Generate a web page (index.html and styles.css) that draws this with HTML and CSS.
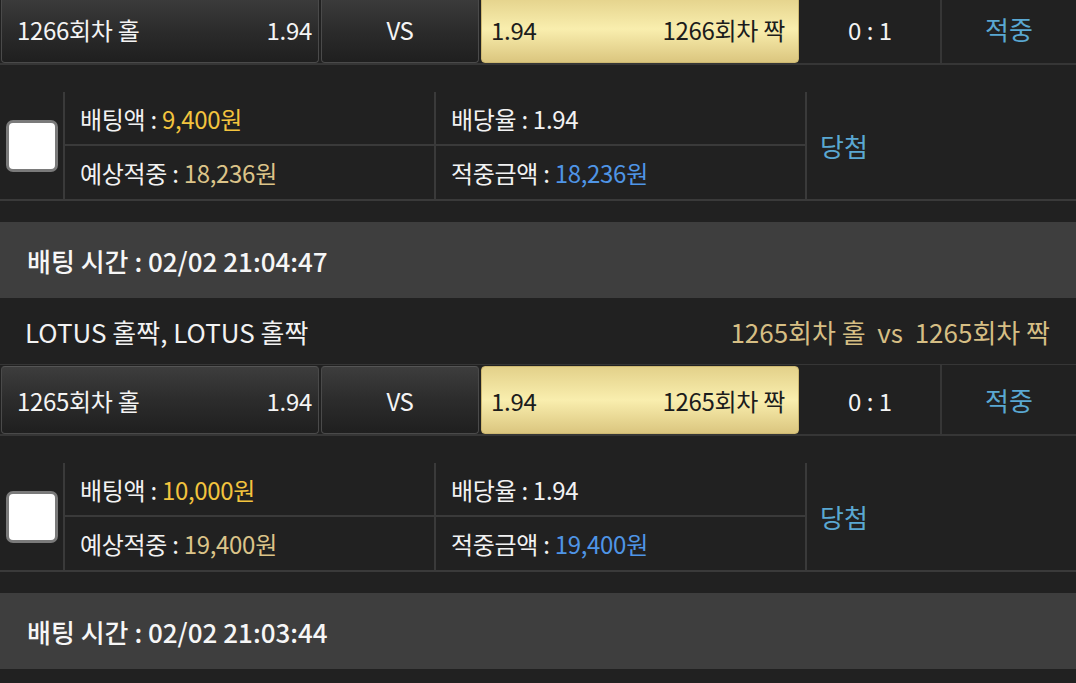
FILE: index.html
```html
<!DOCTYPE html>
<html>
<head>
<meta charset="utf-8">
<title>배팅 내역</title>
<link rel="stylesheet" href="styles.css">
</head>
<body>
<div class="list">
  <section class="bet">
    <div class="match">
      <div class="pick"><div class="btn btn-dark btn-home"><span>1266회차 홀</span><span>1.94</span></div></div>
      <div class="pick pick-vs"><div class="btn btn-dark btn-vs">VS</div></div>
      <div class="pick"><div class="btn btn-gold btn-away"><span>1.94</span><span>1266회차 짝</span></div></div>
      <div class="score">0 : 1</div>
      <div class="result">적중</div>
    </div>
    <div class="detail">
      <div class="check"><span class="box"></span></div>
      <div class="cell top">배팅액 : <span class="amt-yellow">9,400원</span></div>
      <div class="cell top">배당율 : 1.94</div>
      <div class="status">당첨</div>
      <div class="cell">예상적중 : <span class="amt-gold">18,236원</span></div>
      <div class="cell">적중금액 : <span class="amt-blue">18,236원</span></div>
    </div>
    <div class="time">배팅 시간 : 02/02 21:04:47</div>
  </section>

  <section class="bet">
    <div class="title">
      <span class="game">LOTUS 홀짝, LOTUS 홀짝</span>
      <span class="round">1265회차 홀 &nbsp;vs &nbsp;1265회차 짝</span>
    </div>
    <div class="match">
      <div class="pick"><div class="btn btn-dark btn-home"><span>1265회차 홀</span><span>1.94</span></div></div>
      <div class="pick pick-vs"><div class="btn btn-dark btn-vs">VS</div></div>
      <div class="pick"><div class="btn btn-gold btn-away"><span>1.94</span><span>1265회차 짝</span></div></div>
      <div class="score">0 : 1</div>
      <div class="result">적중</div>
    </div>
    <div class="detail">
      <div class="check"><span class="box"></span></div>
      <div class="cell top">배팅액 : <span class="amt-yellow">10,000원</span></div>
      <div class="cell top">배당율 : 1.94</div>
      <div class="status">당첨</div>
      <div class="cell">예상적중 : <span class="amt-gold">19,400원</span></div>
      <div class="cell">적중금액 : <span class="amt-blue">19,400원</span></div>
    </div>
    <div class="time">배팅 시간 : 02/02 21:03:44</div>
  </section>
</div>
</body>
</html>
```

FILE: styles.css
```css
* { box-sizing: border-box; }

html, body {
  margin: 0;
  padding: 0;
  background: #212121;
  color: #f2f2f2;
  font-family: "Noto Sans CJK KR", "Noto Sans", sans-serif;
  overflow: hidden;
}

.list {
  margin-top: -7px;
}

/* title row */
.title {
  height: 66px;
  display: flex;
  align-items: center;
  justify-content: space-between;
  padding: 0 26px 0 25px;
  font-size: 26px;
}
.title .round {
  color: #d6be84;
}

/* match row */
.match {
  display: flex;
  height: 72px;
  border-top: 1px solid #363636;
  border-bottom: 2px solid #363636;
  padding: 1px 0 0;
}
.pick {
  width: 320px;
  padding: 0 1px;
  height: 68px;
}
.pick-vs {
  width: 160px;
}
.btn {
  height: 100%;
  border-radius: 4px;
  display: flex;
  align-items: center;
  font-size: 24px;
  letter-spacing: -0.3px;
}
.btn-dark {
  background: linear-gradient(#3d3d3d, #2c2c2c 50%, #1f1f1f);
  border: 1px solid #4a4a4a;
  border-top-color: #555;
  color: #f4f4f4;
}
.btn-home {
  justify-content: space-between;
  padding: 0 6px 0 15px;
}
.btn-vs {
  justify-content: center;
}
.btn-gold {
  background: linear-gradient(#e3d18a, #f9eeae 50%, #dbc67f);
  border: 1px solid #cdb871;
  color: #1c1c1c;
  justify-content: space-between;
  padding: 0 13px 0 9px;
}
.score {
  width: 140px;
  display: flex;
  align-items: center;
  justify-content: center;
  font-size: 24px;
  color: #f4f4f4;
}
.result {
  flex: 1;
  display: flex;
  align-items: center;
  justify-content: center;
  border-left: 2px solid #363636;
  font-size: 26px;
  color: #5aa8d2;
  margin-top: -1px;
}

/* detail table */
.detail {
  display: grid;
  grid-template-columns: 63px 371px 371px 1fr;
  grid-template-rows: 54px 53px;
  border-bottom: 2px solid #3a3a3a;
  margin: 27px 0 21px;
  font-size: 24px;
  letter-spacing: -0.3px;
}
.check {
  grid-row: 1 / 3;
  display: flex;
  align-items: center;
  justify-content: center;
}
.box {
  width: 52px;
  height: 52px;
  background: #fff;
  border: 3px solid #7a7a7a;
  border-radius: 7px;
}
.cell {
  border-left: 2px solid #3a3a3a;
  display: flex;
  align-items: center;
  padding-left: 15px;
  white-space: pre;
}
.cell.top {
  border-bottom: 2px solid #3a3a3a;
}
.status {
  grid-column: 4;
  grid-row: 1 / 3;
  border-left: 2px solid #3a3a3a;
  display: flex;
  align-items: center;
  padding-left: 13px;
  font-size: 26px;
  letter-spacing: 0;
  color: #5aa8d2;
}
.amt-yellow { color: #f3c43e; }
.amt-gold { color: #dcc489; }
.amt-blue { color: #4f95e6; }

/* time bar */
.time {
  height: 76px;
  background: #3e3e3e;
  display: flex;
  align-items: center;
  padding-left: 27px;
  font-size: 26px;
  font-weight: 500;
  color: #f6f6f6;
}
```
